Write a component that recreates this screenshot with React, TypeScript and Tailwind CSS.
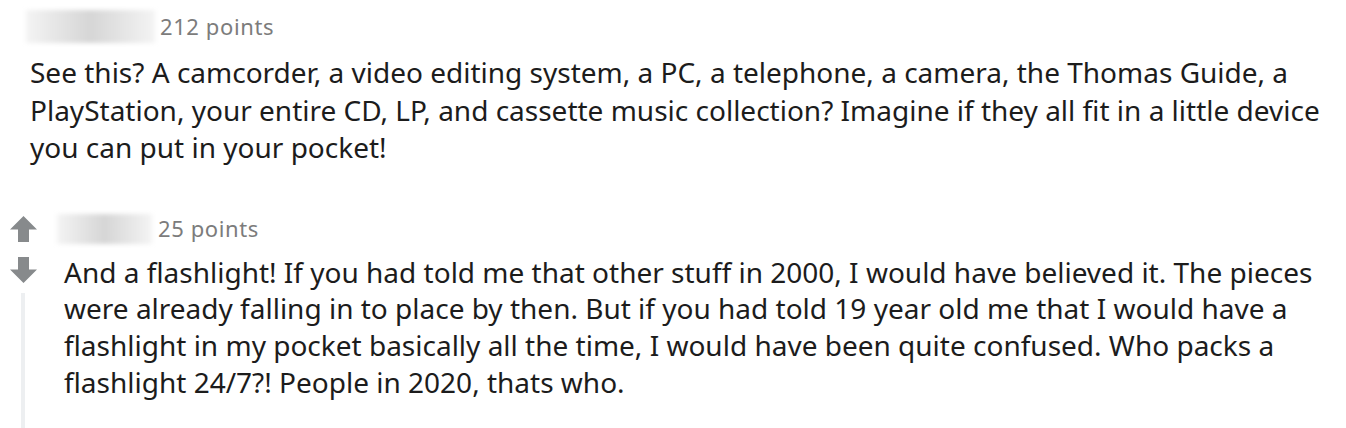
function Blur({ w, h }: { w: string; h: string }) {
  return (
    <div className={`${w} ${h} bg-gradient-to-r from-[#f4f4f4] via-[#d6d6d6] to-[#f4f4f4] blur-[2px]`} />
  );
}

function Arrow({ down }: { down?: boolean }) {
  return (
    <svg width="27" height="26" viewBox="0 0 27 26" className={down ? 'rotate-180' : ''}>
      <path d="M13.5 0 L27 13.5 L19 13.5 L19 26 L8 26 L8 13.5 L0 13.5 Z" fill="#878a8c" />
    </svg>
  );
}

export default function App() {
  return (
    <div className="w-[1346px] h-[428px] bg-white overflow-hidden pt-[10px] font-['Noto_Sans',sans-serif] text-[#1c1c1c]">
      {/* top comment */}
      <div className="pl-[26px]">
        <div className="flex items-center gap-[5px] h-[33px]">
          <Blur w="w-[129px]" h="h-[33px]" />
          <span className="text-[22px] tracking-[0.6px] text-[#7c7c7c]">212 points</span>
        </div>
        <p className="pl-[4px] text-[28px] leading-[37.5px] mt-[11px] whitespace-nowrap">
          See this? A camcorder, a video editing system, a PC, a telephone, a camera, the Thomas Guide, a
          <br />
          PlayStation, your entire CD, LP, and cassette music collection? Imagine if they all fit in a little device
          <br />
          you can put in your pocket!
        </p>
      </div>

      {/* reply */}
      <div className="flex mt-[47px]">
        <div className="w-[46px] shrink-0 flex flex-col items-center pt-[2px]">
          <Arrow />
          <div className="mt-[15px]">
            <Arrow down />
          </div>
          <div className="w-[4px] h-[200px] bg-[#edeff1] mt-[10px]" />
        </div>
        <div className="flex-1">
          <div className="flex items-center gap-[6px] h-[30px] pl-[11px]">
            <Blur w="w-[95px]" h="h-[30px]" />
            <span className="text-[22px] tracking-[0.6px] text-[#7c7c7c]">25 points</span>
          </div>
          <p className="pl-[18px] text-[28px] leading-[36.7px] mt-[10px] whitespace-nowrap">
            And a flashlight! If you had told me that other stuff in 2000, I would have believed it. The pieces
            <br />
            were already falling in to place by then. But if you had told 19 year old me that I would have a
            <br />
            flashlight in my pocket basically all the time, I would have been quite confused. Who packs a
            <br />
            flashlight 24/7?! People in 2020, thats who.
          </p>
        </div>
      </div>
    </div>
  );
}
